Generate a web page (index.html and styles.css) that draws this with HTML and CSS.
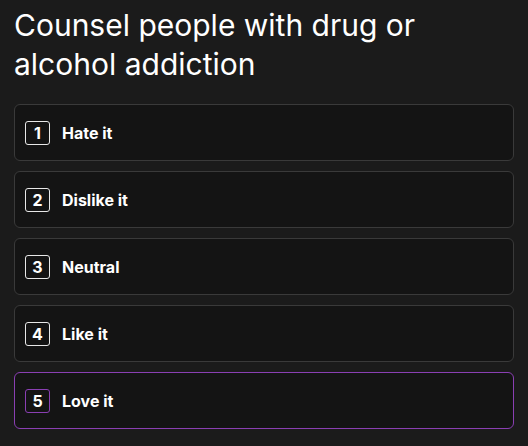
FILE: index.html
```html
<!DOCTYPE html>
<html lang="en">
<head>
  <meta charset="UTF-8" />
  <meta name="viewport" content="width=device-width, initial-scale=1.0"/>
  <title>Question</title>
  <link rel="stylesheet" href="styles.css">
</head>
<body>

  <div class="question">
    <h1>Counsel people with drug or alcohol addiction</h1>

    <div class="options">
      <div class="option"><span class="key">1</span><span class="label">Hate it</span></div>
      <div class="option"><span class="key">2</span><span class="label">Dislike it</span></div>
      <div class="option"><span class="key">3</span><span class="label">Neutral</span></div>
      <div class="option"><span class="key">4</span><span class="label">Like it</span></div>
      <div class="option selected"><span class="key">5</span><span class="label">Love it</span></div>
    </div>
  </div>

</body>
</html>
```

FILE: styles.css
```css
body {
  font-family: Inter, "Noto Sans", sans-serif;
  background: #1b1b1b;
  color: #ffffff;
  margin: 0;
  padding: 0 14px;
}

h1 {
  font-size: 30px;
  font-weight: 400;
  line-height: 39px;
  margin: 6px 0 20px;
}

.options {
  display: flex;
  flex-direction: column;
  gap: 10px;
}

.option {
  display: flex;
  align-items: center;
  gap: 12px;
  height: 55px;
  padding: 0 10px;
  background: #141414;
  border: 1px solid #3a3a3a;
  border-radius: 6px;
}

.option.selected {
  border-color: #8a3fb3;
}

.key {
  display: flex;
  justify-content: center;
  align-items: center;
  width: 23px;
  height: 22px;
  border: 1px solid #e8e8e8;
  border-radius: 3px;
  font-size: 16px;
  font-weight: 700;
}

.selected .key {
  border-color: #8a3fb3;
}

.label {
  font-size: 16px;
  font-weight: 700;
}
```
